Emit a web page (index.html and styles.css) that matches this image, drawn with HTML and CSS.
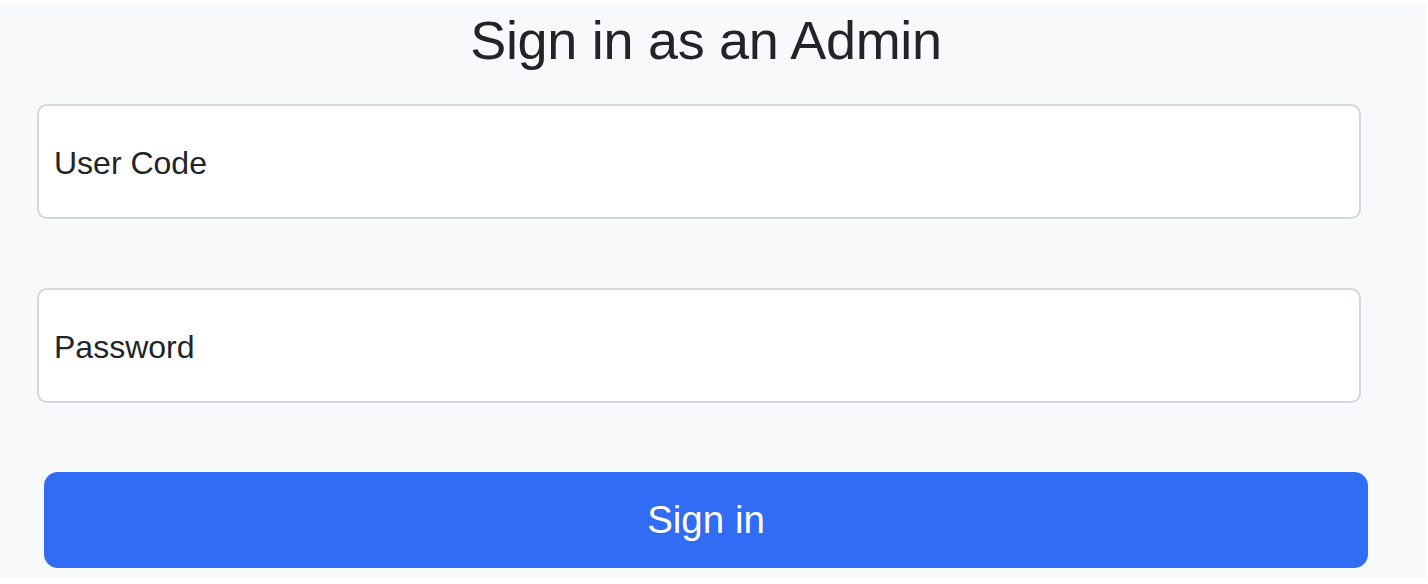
FILE: index.html
```html
<!DOCTYPE html>
<html lang="en">
<head>
<meta charset="utf-8">
<title>Sign in as an Admin</title>
<link rel="stylesheet" href="styles.css">
</head>
<body>
<main class="page">
  <form class="signin">
    <h1 class="title">Sign in as an Admin</h1>
    <input class="field field-first" type="text" placeholder="User Code">
    <input class="field" type="password" placeholder="Password">
    <button class="submit" type="button">Sign in</button>
  </form>
</main>
</body>
</html>
```

FILE: styles.css
```css
html, body {
  margin: 0;
  padding: 0;
  background: #ffffff;
}

.page {
  margin-top: 5px;
  width: 1426px;
  height: 573px;
  background: #f8f9fa;
  box-sizing: border-box;
  padding-top: 2px;
  font-family: "Liberation Sans", Arial, sans-serif;
  color: #212529;
}

.signin {
  width: 1412px;
  display: flex;
  flex-direction: column;
  align-items: flex-start;
}

.title {
  align-self: stretch;
  margin: 0;
  font-size: 54px;
  letter-spacing: -0.3px;
  line-height: 66px;
  font-weight: 400;
  text-align: center;
  color: #212529;
}

.field {
  box-sizing: border-box;
  margin: 0 0 0 37px;
  width: 1324px;
  height: 115px;
  padding: 3px 15px 0;
  border: 2px solid #d3d6db;
  border-radius: 10px;
  background: #ffffff;
  font-family: "Liberation Sans", Arial, sans-serif;
  font-size: 32px;
  color: #212529;
  outline: none;
}

.field::placeholder {
  color: #212529;
  opacity: 1;
}

.field-first {
  margin-top: 31px;
}

.field + .field {
  margin-top: 69px;
}

.submit {
  box-sizing: border-box;
  margin: 69px 0 0 44px;
  width: 1324px;
  height: 96px;
  border: none;
  border-radius: 14px;
  background: #316cf4;
  color: #ffffff;
  font-family: "Liberation Sans", Arial, sans-serif;
  font-size: 38.5px;
  padding: 0;
}
```
